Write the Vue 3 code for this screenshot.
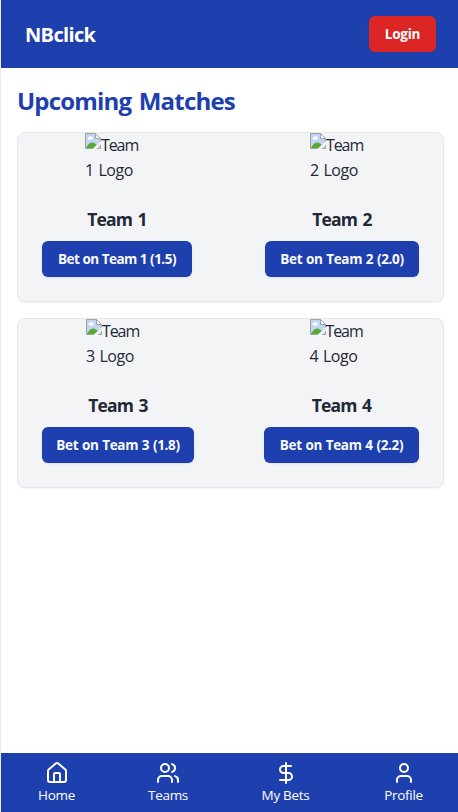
<script setup>
const matches = [
  [
    { id: 1, odds: '1.5', width: 150 },
    { id: 2, odds: '2.0', width: 154 },
  ],
  [
    { id: 3, odds: '1.8', width: 152 },
    { id: 4, odds: '2.2', width: 155 },
  ],
]

const tabs = [
  {
    label: 'Home',
    width: 37,
    paths: [
      'M15 21v-8a1 1 0 0 0-1-1h-4a1 1 0 0 0-1 1v8',
      'M3 10a2 2 0 0 1 .709-1.528l7-5.999a2 2 0 0 1 2.582 0l7 5.999A2 2 0 0 1 21 10v9a2 2 0 0 1-2 2H5a2 2 0 0 1-2-2z',
    ],
  },
  {
    label: 'Teams',
    width: 38,
    paths: [
      'M16 21v-2a4 4 0 0 0-4-4H6a4 4 0 0 0-4 4v2',
      'M13 7a4 4 0 1 1-8 0a4 4 0 0 1 8 0z',
      'M22 21v-2a4 4 0 0 0-3-3.87',
      'M16 3.13a4 4 0 0 1 0 7.75',
    ],
  },
  {
    label: 'My Bets',
    width: 49,
    paths: ['M12 2v20', 'M17 5H9.5a3.5 3.5 0 0 0 0 7h5a3.5 3.5 0 0 1 0 7H6'],
  },
  {
    label: 'Profile',
    width: 39,
    paths: ['M19 21v-2a4 4 0 0 0-4-4H9a4 4 0 0 0-4 4v2', 'M16 7a4 4 0 1 1-8 0a4 4 0 0 1 8 0z'],
  },
]
</script>

<template>
  <div class="viewport">
    <div class="app">
      <header class="header">
        <h1 class="brand">NBclick</h1>
        <button class="btn login">Login</button>
      </header>

      <main class="main">
        <h2 class="heading">Upcoming Matches</h2>
        <section v-for="(match, i) in matches" :key="i" class="card">
          <div v-for="team in match" :key="team.id" class="team">
            <div class="logo">
              <svg class="broken" width="16" height="16" viewBox="0 0 16 16">
                <path d="M0.500 0.500H10.500L15.500 5.500V15.500H0.500Z" fill="#c3d5f5" stroke="#a0a0a0" />
                <path d="M3 6.500a1.500 1.500 0 0 1 1-2.500a2 2 0 0 1 3.500 1a1 1 0 0 1 0 1.500z" fill="#fff" />
                <path d="M1 15c1.500-3.500 4-5.500 6-5.500c2.500 0 4 1.500 5 2.500l-3 3z" fill="#57ab35" />
                <path d="M10.500 0.500V5.500H15.500Z" fill="#fff" stroke="#a0a0a0" />
                <path d="M7.500 16L16 8V11.500L11.500 16Z" fill="#f3f4f6" />
              </svg><span class="alt first">Team</span><br /><span class="alt">{{ team.id }} Logo</span>
            </div>
            <h3 class="name">Team {{ team.id }}</h3>
            <button class="btn bet" :class="{ tight: team.id === 1 }" :style="{ width: team.width + 'px' }">
              Bet on Team {{ team.id }} ({{ team.odds }})
            </button>
          </div>
        </section>
      </main>

      <nav class="nav">
        <a v-for="tab in tabs" :key="tab.label" class="tab" :style="{ width: tab.width + 'px' }">
          <svg class="icon" width="24" height="24" viewBox="0 0 24 24">
            <path v-for="d in tab.paths" :key="d" :d="d" />
          </svg>
          <span class="label">{{ tab.label }}</span>
        </a>
      </nav>
    </div>
  </div>
</template>

<style>
body {
  margin: 0;
  background: #fff;
}
</style>

<style scoped>
* {
  box-sizing: border-box;
}
.viewport {
  width: 100%;
  height: 812px;
  overflow: hidden;
  border-left: 1px solid #e9eaec;
}
.app {
  width: 459px;
  height: 812px;
  display: flex;
  flex-direction: column;
  font-family: 'Open Sans', 'Noto Sans', sans-serif;
  color: #1f2937;
}
.header {
  display: flex;
  justify-content: space-between;
  align-items: center;
  height: 68px;
  padding: 0 24px;
  background: #1e40af;
  color: #fff;
}
.brand {
  margin: 0;
  padding-top: 2px;
  font-size: 20px;
  line-height: 28px;
  font-weight: 700;
  letter-spacing: -0.65px;
}
.btn {
  display: flex;
  align-items: center;
  justify-content: center;
  height: 36px;
  padding: 0;
  border: 0;
  border-radius: 6px;
  font-family: inherit;
  font-size: 13.5px;
  line-height: 20px;
  font-weight: 700;
  white-space: nowrap;
  box-shadow: 0 1px 2px rgba(0, 0, 0, 0.08);
}
.login {
  width: 67px;
  background: #dc2626;
  color: #fff;
  letter-spacing: -0.25px;
}
.main {
  flex: 1;
  padding: 16px;
}
.heading {
  margin: 0 0 15px;
  padding-top: 1px;
  font-size: 24px;
  line-height: 32px;
  font-weight: 700;
  color: #1e40af;
  letter-spacing: -0.8px;
  word-spacing: 2px;
}
.card {
  display: flex;
  justify-content: space-between;
  height: 170px;
  margin-bottom: 16px;
  padding: 0 24px 24px;
  border: 1px solid #e5e7eb;
  border-radius: 8px;
  background: #f3f4f6;
  box-shadow: 0 1px 2px rgba(0, 0, 0, 0.05);
}
.team {
  display: flex;
  flex-direction: column;
  align-items: center;
}
.logo {
  width: 64px;
  height: 64px;
  margin-bottom: 8px;
  font-size: 16px;
  line-height: 25px;
  white-space: nowrap;
}
.broken {
  display: inline-block;
  vertical-align: top;
}
.alt {
  letter-spacing: -0.5px;
  word-spacing: 1.2px;
}
.first {
  letter-spacing: -1.1px;
}
.name {
  margin: 0 0 8px;
  font-size: 17.5px;
  line-height: 28px;
  font-weight: 700;
  letter-spacing: -0.9px;
  word-spacing: 2px;
}
.bet {
  background: #1e40af;
  color: #f9fafb;
  letter-spacing: -0.35px;
  word-spacing: 0.6px;
}
.tight {
  letter-spacing: -0.5px;
  word-spacing: 0;
}
.nav {
  display: flex;
  justify-content: space-around;
  height: 59px;
  padding-top: 8px;
  background: #1e40af;
  color: #fff;
}
.tab {
  display: flex;
  flex-direction: column;
  align-items: center;
}
.icon {
  flex: none;
  fill: none;
  stroke: currentColor;
  stroke-width: 2;
  stroke-linecap: round;
  stroke-linejoin: round;
}
.label {
  font-size: 13.5px;
  font-weight: 500;
  line-height: 21px;
  white-space: nowrap;
  letter-spacing: -0.3px;
}
</style>
